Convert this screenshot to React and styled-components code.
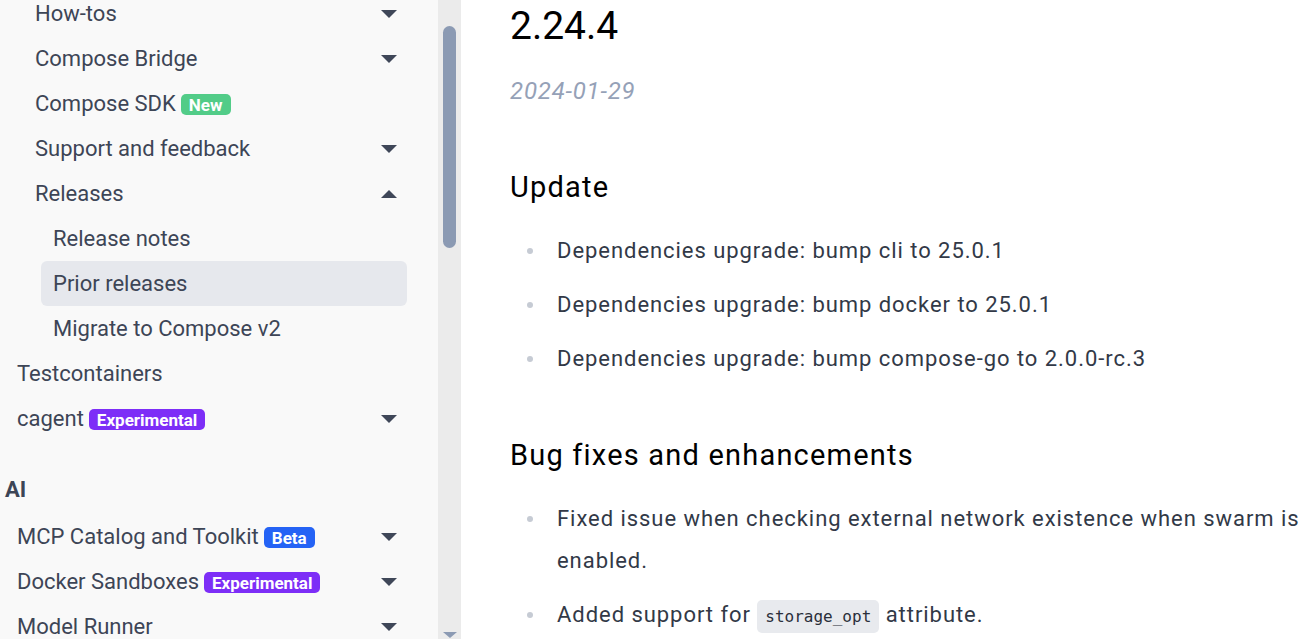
import styled, { createGlobalStyle } from 'styled-components';

const GlobalStyle = createGlobalStyle`
  html, body {
    margin: 0;
    padding: 0;
    background: #ffffff;
    font-family: Roboto, "Liberation Sans", sans-serif;
    overflow: hidden;
  }
`;

const nav = [
  { label: 'How-tos', depth: 1, caret: 'down' },
  { label: 'Compose Bridge', depth: 1, caret: 'down' },
  { label: 'Compose SDK', depth: 1, badge: 'New' },
  { label: 'Support and feedback', depth: 1, caret: 'down' },
  { label: 'Releases', depth: 1, caret: 'up' },
  { label: 'Release notes', depth: 2 },
  { label: 'Prior releases', depth: 2, active: true },
  { label: 'Migrate to Compose v2', depth: 2 },
  { label: 'Testcontainers', depth: 0 },
  { label: 'cagent', depth: 0, badge: 'Experimental', caret: 'down' },
  { section: 'AI' },
  { label: 'MCP Catalog and Toolkit', depth: 0, badge: 'Beta', caret: 'down' },
  { label: 'Docker Sandboxes', depth: 0, badge: 'Experimental', caret: 'down' },
  { label: 'Model Runner', depth: 0, caret: 'down' },
];

const badgeColors = {
  New: '#52cc88',
  Experimental: '#7d2ef7',
  Beta: '#2563f5',
};

export default function App() {
  return (
    <>
      <GlobalStyle />
      <Page>
        <Sidebar>
          <NavList>
            {nav.map((item, i) =>
              item.section ? (
                <SectionTitle key={i}>{item.section}</SectionTitle>
              ) : (
                <NavRow key={i} depth={item.depth} active={item.active}>
                  <NavLabel>
                    {item.label}
                    {item.badge && <Badge bg={badgeColors[item.badge]}>{item.badge}</Badge>}
                  </NavLabel>
                  {item.caret && <Caret up={item.caret === 'up'} />}
                </NavRow>
              )
            )}
          </NavList>
        </Sidebar>
        <ScrollTrack>
          <Thumb />
          <ArrowDown />
        </ScrollTrack>
        <Main>
          <Version>2.24.4</Version>
          <Date>2024-01-29</Date>
          <H3>Update</H3>
          <List>
            <li>Dependencies upgrade: bump cli to 25.0.1</li>
            <li>Dependencies upgrade: bump docker to 25.0.1</li>
            <li>Dependencies upgrade: bump compose-go to 2.0.0-rc.3</li>
          </List>
          <H3>Bug fixes and enhancements</H3>
          <List>
            <li>Fixed issue when checking external network existence when swarm is enabled.</li>
            <li>Added support for <Code>storage_opt</Code> attribute.</li>
          </List>
        </Main>
      </Page>
    </>
  );
}

const Page = styled.div`
  display: flex;
  height: 639px;
  overflow: hidden;
`;

const Sidebar = styled.nav`
  width: 438px;
  flex-shrink: 0;
  background: #f9f9f9;
  overflow: hidden;
`;

const NavList = styled.div`
  display: flex;
  flex-direction: column;
  margin-top: -9px;
  padding-left: 5px;
  width: 402px;
`;

const NavRow = styled.div`
  display: flex;
  align-items: center;
  justify-content: space-between;
  height: 45px;
  margin-left: ${p => p.depth * 18}px;
  padding: 0 10px 0 12px;
  border-radius: 6px;
  background: ${p => (p.active ? '#e6e8ed' : 'transparent')};
  color: #3d4556;
  font-size: 22px;
`;

const NavLabel = styled.span`
  display: flex;
  align-items: center;
  gap: 5px;
  white-space: nowrap;
`;

const Badge = styled.span`
  display: inline-flex;
  align-items: center;
  height: 21px;
  padding: 0 8px;
  border-radius: 5px;
  background: ${p => p.bg};
  color: #ffffff;
  font-size: 17px;
  font-weight: 700;
  margin-top: 2px;
`;

const Caret = styled.span`
  width: 0;
  height: 0;
  border-left: 8px solid transparent;
  border-right: 8px solid transparent;
  ${p => (p.up ? 'border-bottom: 8px solid #3f4758;' : 'border-top: 8px solid #3f4758;')}
`;

const SectionTitle = styled.div`
  font-size: 22px;
  font-weight: 700;
  color: #3d4556;
  padding: 36px 0 12px 0;
  line-height: 25px;
`;

const ScrollTrack = styled.div`
  width: 23px;
  flex-shrink: 0;
  background: #ebebeb;
  display: flex;
  flex-direction: column;
  align-items: center;
`;

const Thumb = styled.div`
  width: 13px;
  height: 222px;
  margin-top: 26px;
  border-radius: 7px;
  background: #8b9ab3;
`;

const ArrowDown = styled.div`
  margin-top: auto;
  margin-bottom: 1px;
  width: 0;
  height: 0;
  border-left: 7px solid transparent;
  border-right: 7px solid transparent;
  border-top: 6px solid #8b9ab3;
`;

const Main = styled.main`
  flex: 1;
  padding: 0 0 0 49px;
  color: #323947;
`;

const Version = styled.h1`
  margin: 0;
  padding-top: 2px;
  font-size: 39px;
  font-weight: 400;
  line-height: 48px;
  color: #000000;
`;

const Date = styled.p`
  margin: 25px 0 0 0;
  font-size: 24px;
  font-style: italic;
  letter-spacing: 0.8px;
  color: #95a1b7;
  line-height: 32px;
`;

const H3 = styled.h3`
  margin: 62px 0 0 0;
  font-size: 29px;
  font-weight: 400;
  letter-spacing: 1.2px;
  line-height: 36px;
  color: #000000;

  & + ul {
    margin-top: 25px;
  }
  ul + & {
    margin-top: 57px;
  }
`;

const List = styled.ul`
  margin: 0;
  padding-left: 47px;
  list-style: none;

  li {
    position: relative;
    font-size: 22px;
    letter-spacing: 0.95px;
    line-height: 42px;
    margin-bottom: 12px;
  }

  li::before {
    content: '';
    position: absolute;
    left: -30px;
    top: 18px;
    width: 6px;
    height: 6px;
    border-radius: 50%;
    background: #c6cbd4;
  }
`;

const Code = styled.code`
  font-family: "DejaVu Sans Mono", "Liberation Mono", monospace;
  font-size: 16px;
  letter-spacing: 0;
  background: #e8eaee;
  border-radius: 5px;
  padding: 7px 8px;
  color: #2a2f3a;
`;
